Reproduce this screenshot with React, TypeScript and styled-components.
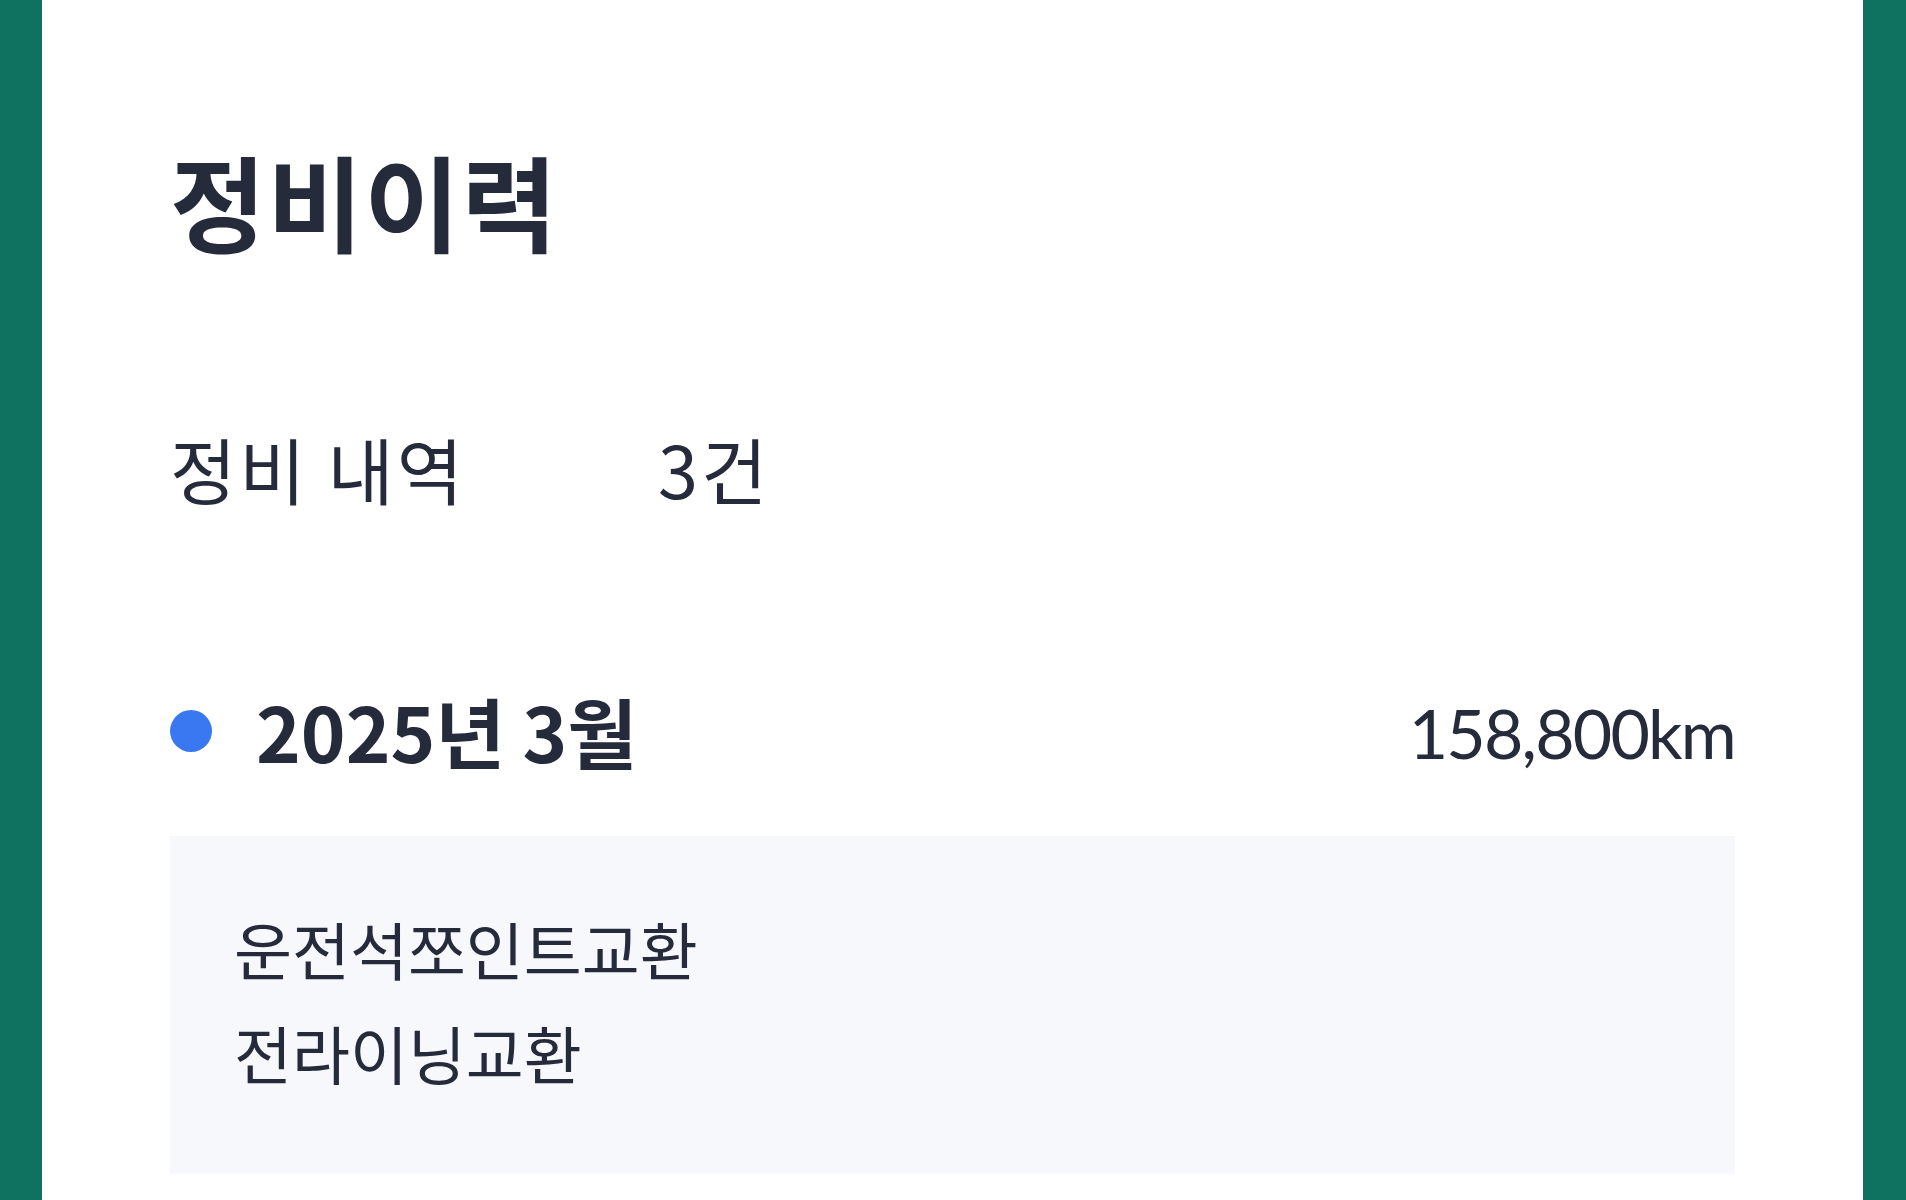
import React from "react";
import styled, { createGlobalStyle } from "styled-components";

const Global = createGlobalStyle`
  html, body { margin: 0; padding: 0; background: #0f7160; }
  body { font-family: "Noto Sans CJK KR", "Noto Sans", sans-serif; }
`;

const Frame = styled.div`
  display: flex;
  height: 1200px;
  padding: 0 43px 0 42px;
  background: #0f7160;
  overflow: hidden;
`;

const Panel = styled.main`
  flex: 1;
  background: #ffffff;
  padding: 0 128px;
  display: flex;
  flex-direction: column;
  color: #252b3b;
`;

const Title = styled.h1`
  margin: 138px 0 0;
  font-size: 104px;
  font-weight: 700;
  line-height: 1.2;
  letter-spacing: 1.5px;
`;

const Summary = styled.div`
  display: grid;
  grid-template-columns: 488px auto;
  margin-top: 162px;
  font-size: 72px;
  font-weight: 400;
  line-height: 1.2;
  letter-spacing: 3px;
`;

const DateRow = styled.div`
  display: flex;
  align-items: center;
  margin-top: 174px;
`;

const Dot = styled.span`
  width: 42px;
  height: 42px;
  border-radius: 50%;
  background: #3a78f2;
  margin-right: 44px;
  flex: none;
`;

const DateText = styled.span`
  font-size: 76px;
  font-weight: 700;
  line-height: 1.2;
  letter-spacing: 0;
  flex: 1;
`;

const Distance = styled.span`
  font-family: Lato, "Open Sans", sans-serif;
  font-size: 68px;
  font-weight: 400;
  line-height: 1.2;
  letter-spacing: -1.8px;
  margin-top: 4px;
`;

const Card = styled.section`
  margin-top: 60px;
  background: #f7f8fb;
  padding: 60px 64px;
  display: flex;
  flex-direction: column;
  height: 338px;
  box-sizing: border-box;
`;

const Item = styled.div`
  font-size: 63px;
  line-height: 104px;
  font-weight: 400;
`;

export default function App() {
  return (
    <>
      <Global />
      <Frame>
        <Panel>
          <Title>정비이력</Title>
          <Summary>
            <span>정비 내역</span>
            <span>3건</span>
          </Summary>
          <DateRow>
            <Dot />
            <DateText>2025년 3월</DateText>
            <Distance>158,800km</Distance>
          </DateRow>
          <Card>
            <Item>운전석쪼인트교환</Item>
            <Item>전라이닝교환</Item>
          </Card>
        </Panel>
      </Frame>
    </>
  );
}
